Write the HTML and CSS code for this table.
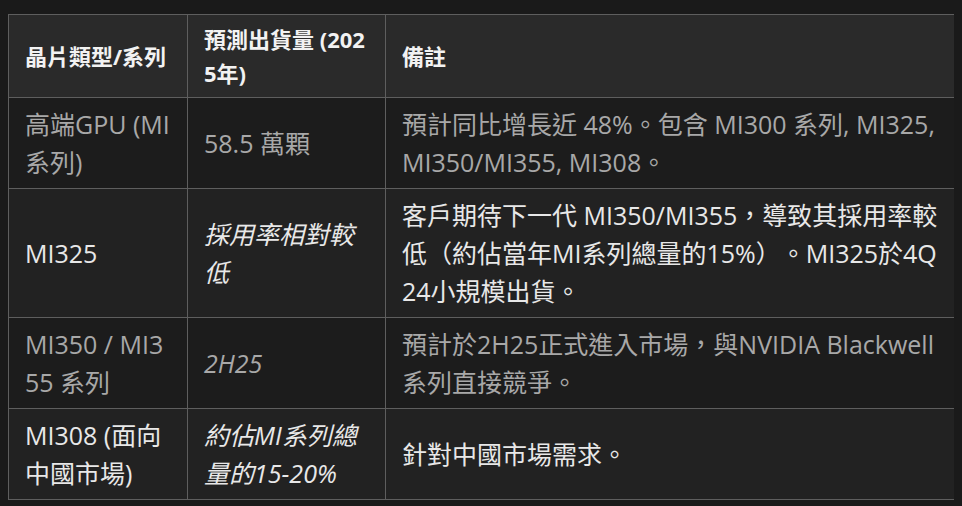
FILE: index.html
```html
<!DOCTYPE html>
<html lang="zh-Hant">
<head>
<meta charset="utf-8">
<title>MI 系列出貨預測</title>
<link rel="stylesheet" href="styles.css">
</head>
<body>
<table class="data-table">
  <colgroup>
    <col class="col-type">
    <col class="col-qty">
    <col class="col-note">
  </colgroup>
  <thead>
    <tr>
      <th>晶片類型/系列</th>
      <th>預測出貨量 (2025年)</th>
      <th>備註</th>
    </tr>
  </thead>
  <tbody>
    <tr class="row-dim">
      <td>高端GPU (MI 系列)</td>
      <td>58.5 萬顆</td>
      <td>預計同比增長近 48%。包含 MI300 系列, MI325, MI350/MI355, MI308。</td>
    </tr>
    <tr class="row-bright">
      <td>MI325</td>
      <td class="em">採用率相對較低</td>
      <td>客戶期待下一代 MI350/MI355，導致其採用率較低（約佔當年MI系列總量的15%）。MI325於4Q24小規模出貨。</td>
    </tr>
    <tr class="row-dim">
      <td>MI350 / MI355 系列</td>
      <td class="em">2H25</td>
      <td>預計於2H25正式進入市場，與NVIDIA Blackwell 系列直接競爭。</td>
    </tr>
    <tr class="row-bright">
      <td>MI308 (面向中國市場)</td>
      <td class="em">約佔MI系列總量的15-20%</td>
      <td>針對中國市場需求。</td>
    </tr>
  </tbody>
</table>
</body>
</html>
```
FILE: styles.css
```css
html, body {
  background: #1a1a1a;
}
body {
  margin: 14px 8px 8px;
  font-family: "Open Sans", "Noto Sans CJK TC", sans-serif;
}
.data-table {
  width: 946px;
  border-collapse: collapse;
  table-layout: fixed;
  text-spacing-trim: space-all;
}
.col-type { width: 179px; }
.col-qty { width: 198px; }
.col-note { width: 569px; }
.data-table th,
.data-table td {
  border: 1px solid #5e5e5e;
  padding: 7px 16px;
  text-align: left;
  vertical-align: middle;
  word-break: break-all;
}
.data-table th {
  background: #2a2a2a;
  color: #f2f2f2;
  font-size: 22px;
  line-height: 34px;
  font-weight: 700;
}
.data-table td {
  font-size: 25px;
  line-height: 38px;
}
.row-dim td {
  background: #1c1c1c;
  color: #a8a8a8;
}
.row-bright td {
  background: #222222;
  color: #e8e8e8;
}
.em {
  font-style: italic;
}
```
